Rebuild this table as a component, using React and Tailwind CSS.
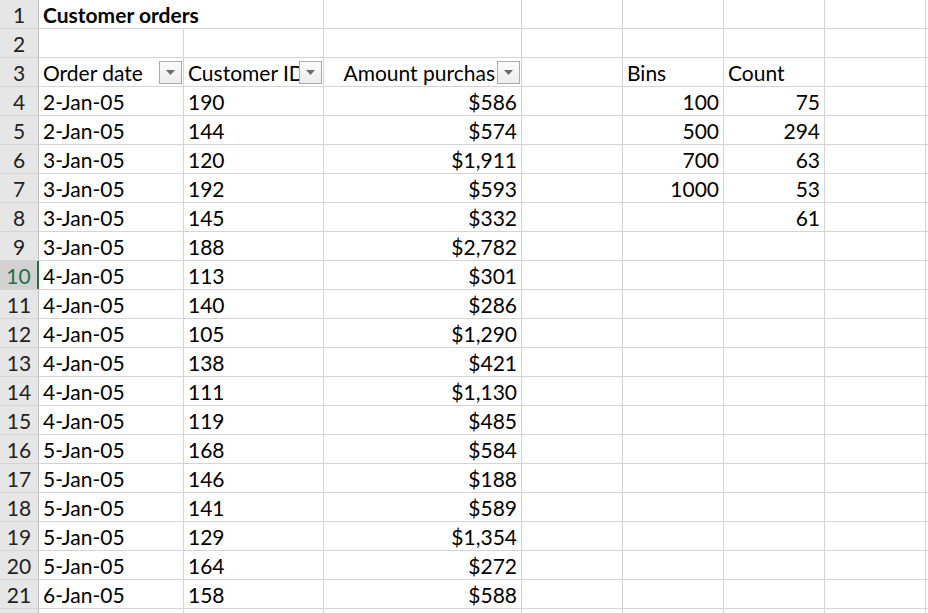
const cols = ["w-[145px]", "w-[140px]", "w-[198px]", "w-[101px]", "w-[101px]", "w-[101px]", "w-[101px]", "flex-1"];

const orders = [
  ["2-Jan-05", "190", "$586"],
  ["2-Jan-05", "144", "$574"],
  ["3-Jan-05", "120", "$1,911"],
  ["3-Jan-05", "192", "$593"],
  ["3-Jan-05", "145", "$332"],
  ["3-Jan-05", "188", "$2,782"],
  ["4-Jan-05", "113", "$301"],
  ["4-Jan-05", "140", "$286"],
  ["4-Jan-05", "105", "$1,290"],
  ["4-Jan-05", "138", "$421"],
  ["4-Jan-05", "111", "$1,130"],
  ["4-Jan-05", "119", "$485"],
  ["5-Jan-05", "168", "$584"],
  ["5-Jan-05", "146", "$188"],
  ["5-Jan-05", "141", "$589"],
  ["5-Jan-05", "129", "$1,354"],
  ["5-Jan-05", "164", "$272"],
  ["6-Jan-05", "158", "$588"],
];

const bins = [
  ["100", "75"],
  ["500", "294"],
  ["700", "63"],
  ["1000", "53"],
  ["", "61"],
];

const Filter = () => (
  <div className="absolute z-20 right-[1px] top-[3px] w-[23px] h-[23px] border border-[#ababab] bg-gradient-to-b from-[#fbfbfb] to-[#ececec] flex items-center justify-center">
    <svg width="9" height="5" viewBox="0 0 9 5">
      <path d="M0 0h9L4.5 5z" fill="#6a6a6a" />
    </svg>
  </div>
);

const Cell = ({ w, children, right, noBorder, filter }) => (
  <div
    className={`${w} relative h-full shrink-0 flex items-center px-[4px] pt-[1px] whitespace-nowrap ${
      noBorder ? "" : "border-r border-[#d4d4d4]"
    } ${right ? "justify-end" : ""}`}
  >
    {children}
    {filter && <Filter />}
  </div>
);

const Row = ({ n, cells, selected }) => (
  <div className="flex h-[29px] border-b border-[#d4d4d4]">
    <div
      className={`w-[39px] shrink-0 h-full flex items-center justify-center pt-[1px] border-r ${
        selected
          ? "bg-[#d2d2d2] text-[#217346] border-r-[2px] border-r-[#217346]"
          : "bg-[#e6e6e6] text-[#222] border-[#bdbdbd]"
      }`}
    >
      {n}
    </div>
    {cells}
  </div>
);

export default function App() {
  const rows = [];
  rows.push(
    <Row
      key={1}
      n={1}
      cells={cols.map((w, i) => (
        <Cell key={i} w={w} noBorder={i === 0 || i === 7}>
          {i === 0 && <span className="font-bold relative z-10">Customer orders</span>}
        </Cell>
      ))}
    />
  );
  rows.push(<Row key={2} n={2} cells={cols.map((w, i) => <Cell key={i} w={w} noBorder={i === 7} />)} />);
  rows.push(
    <Row
      key={3}
      n={3}
      cells={cols.map((w, i) => {
        if (i === 0) return <Cell key={i} w={w} filter>Order date</Cell>;
        if (i === 1) return <Cell key={i} w={w} filter>Customer ID</Cell>;
        if (i === 2)
          return (
            <Cell key={i} w={w} right filter>
              <span className="mr-[22px]">Amount purchas</span>
            </Cell>
          );
        if (i === 4) return <Cell key={i} w={w}>Bins</Cell>;
        if (i === 5) return <Cell key={i} w={w}>Count</Cell>;
        return <Cell key={i} w={w} noBorder={i === 7} />;
      })}
    />
  );
  orders.forEach((o, r) => {
    const b = bins[r];
    rows.push(
      <Row
        key={r + 4}
        n={r + 4}
        selected={r + 4 === 10}
        cells={cols.map((w, i) => {
          if (i === 0) return <Cell key={i} w={w}>{o[0]}</Cell>;
          if (i === 1) return <Cell key={i} w={w}>{o[1]}</Cell>;
          if (i === 2) return <Cell key={i} w={w} right>{o[2]}</Cell>;
          if (i === 4) return <Cell key={i} w={w} right>{b ? b[0] : ""}</Cell>;
          if (i === 5) return <Cell key={i} w={w} right>{b ? b[1] : ""}</Cell>;
          return <Cell key={i} w={w} noBorder={i === 7} />;
        })}
      />
    );
  });
  rows.push(<Row key={22} n="" cells={cols.map((w, i) => <Cell key={i} w={w} noBorder={i === 7} />)} />);

  return (
    <div className="w-[928px] h-[613px] overflow-hidden bg-white text-[21px] text-black font-['Lato','Open_Sans',sans-serif] leading-none">
      {rows}
    </div>
  );
}
